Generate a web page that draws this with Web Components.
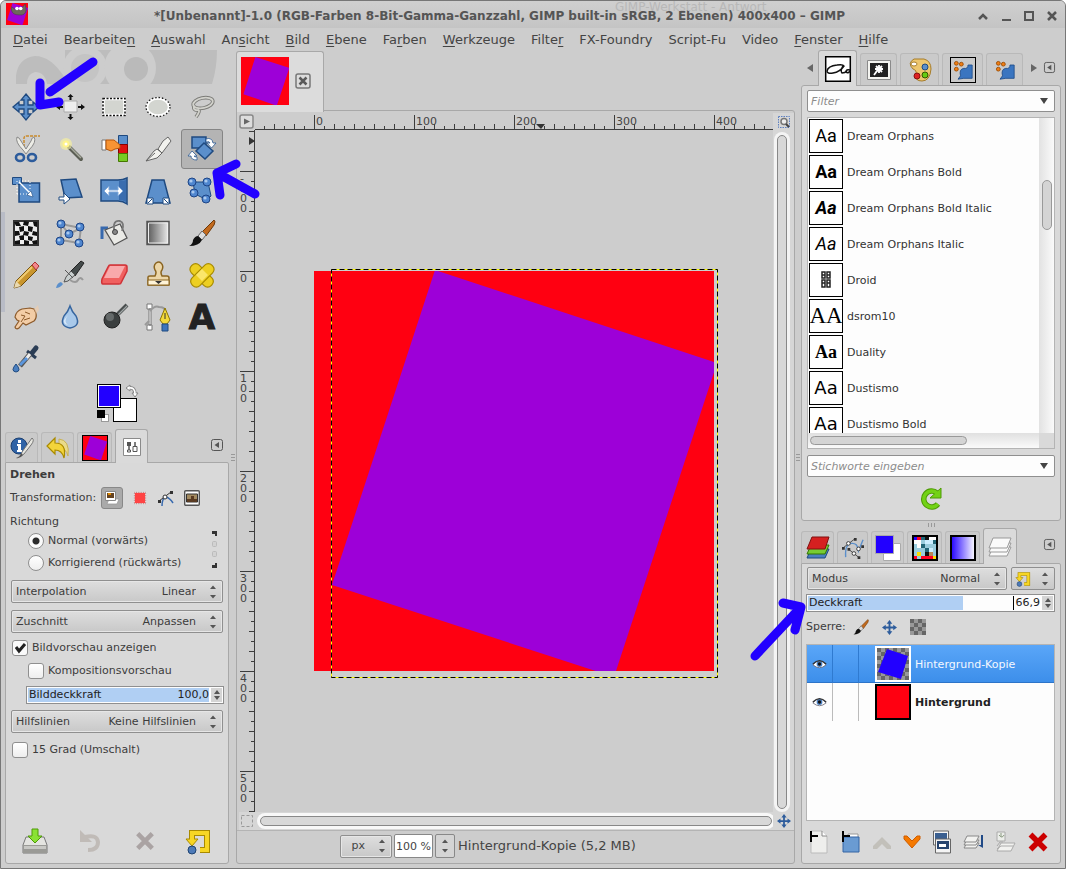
<!DOCTYPE html>
<html lang="de">
<head>
<meta charset="utf-8">
<title>GIMP</title>
<style>
html,body{margin:0;background:#fff;font:11px/16px "DejaVu Sans",sans-serif;color:#3c3c3c}
</style>
</head>
<body>
<gimp-window></gimp-window>
<script>
const RESET = `*{box-sizing:border-box}button,input,select{font:inherit;color:inherit;margin:0;padding:0;border:0;background:none;outline:0}button{display:flex;align-items:center;justify-content:center}`;
function define(name, css, html, ready) {
  customElements.define(name, class extends HTMLElement {
    connectedCallback() {
      if (this.shadowRoot) return;
      const root = this.attachShadow({ mode: 'open' });
      const t = document.createElement('template');
      t.innerHTML = `<style>${RESET}${css}</style>` + (typeof html === 'function' ? html(this) : html);
      root.append(t.content.cloneNode(true));
      if (ready) ready(this, root);
    }
  });
}
const B = 'fill="#5b8fcb" stroke="#1f4a80"';
const purple = `<path fill="#f01" d="M0 0h40v40H0z"/><path fill="#9d00d8" d="M12 0 40 9v1L30 40h-2L2 31z"/>`;
const node = (x, y) => `<circle cx="${x}" cy="${y}" r="4" fill="#4f86cf" stroke="#1d4486"/><circle cx="${x - 1}" cy="${y - 1}" r="1.6" fill="#a9c8ee"/>`;
const resetIcon = `<path fill="none" stroke="#a98a00" stroke-width="6" d="M7 12V5h15v17h-7"/><path fill="#f7d624" stroke="#a98a00" d="M1 11h12l-6 7z"/><path fill="none" stroke="#f7d624" stroke-width="4" d="M7 12V5h15v17h-7"/><circle cx="7" cy="22" r="4" fill="#4d7ab8" stroke="#1e4372"/>`;
const ICONS = {
  move: ['0 0 28 28', `<path ${B} stroke-width="1.3" d="M14 1l5 6h-3v5h5V9l6 5-6 5v-3h-5v5h3l-5 6-5-6h3v-5H7v3l-6-5 6-5v3h5V7H9z"/>`],
  align: ['0 0 28 28', `<path fill="#eee" stroke="#aaa" d="M8 8h13v11H8z"/><path fill="#111" d="M14.500 1l3 3h-2v3h-2V4h-2zM14.500 27l-3-3h2v-3h2v3h2zM29 14l-4 3v-2h-3v-2h3v-2zM0 14l4-3v2h3v2H4v2z"/>`],
  rect: ['0 0 28 28', `<path fill="#d3d5d0" stroke="#fff" stroke-width="2.500" d="M3.500 6h21v16h-21z"/><path fill="none" stroke="#111" stroke-width="1.500" stroke-dasharray="2 1.500" d="M3 5.500h22v17H3z"/>`],
  ellipse: ['0 0 28 28', `<ellipse cx="14" cy="14" rx="11" ry="8.500" fill="#d3d5d0" stroke="#fff" stroke-width="2.500"/><ellipse cx="14" cy="14" rx="12" ry="9.500" fill="none" stroke="#222" stroke-width="1.300" stroke-dasharray="1.600 1.800"/>`],
  lasso: ['0 0 28 28', `<g fill="none" stroke="#7c7c78" stroke-width="3.600"><ellipse cx="15" cy="10" rx="10" ry="5" transform="rotate(-12 15 10)"/><path d="M7 13c-3 2 0 5 3 4 2 0 1 3-2 7"/></g><g fill="none" stroke="#d2d2cc" stroke-width="1.800"><ellipse cx="15" cy="10" rx="10" ry="5" transform="rotate(-12 15 10)"/><path d="M7 13c-3 2 0 5 3 4 2 0 1 3-2 7"/></g>`],
  scissors: ['0 0 28 28', `<path fill="none" stroke="#c98b2d" stroke-width="1.500" stroke-dasharray="3 1" d="M12 12V3q0-2 3-2h13"/><path fill="#ecece6" stroke="#888" d="M5 2q-2 5 6 13l3 4 3-4Q25 7 22 2q-2 0-3 4l-5 8-5-8Q7 2 5 2z"/><ellipse cx="8" cy="22.500" rx="4" ry="3.500" fill="none" stroke="#2d5c9c" stroke-width="2.600"/><ellipse cx="20" cy="22.500" rx="4" ry="3.500" fill="none" stroke="#2d5c9c" stroke-width="2.600"/>`],
  wand: ['0 0 28 28', `<path stroke="#5c5f55" stroke-width="4" stroke-linecap="round" d="M13 12l12 12"/><path stroke="#a6a99c" stroke-width="1.500" d="M14 12l11 11"/><circle cx="10" cy="9" r="6" fill="#fcf59a" opacity=".6"/><circle cx="10" cy="9" r="3.500" fill="#fff48a"/><circle cx="10" cy="9" r="1.500" fill="#fff"/>`],
  bycolor: ['0 0 28 28', `<path fill="#5b8fcb" stroke="#1f4a80" d="M18.500.5h9v9h-9z"/><path fill="#d11" stroke="#800" d="M18.500 9.500h9v9h-9z"/><path fill="#7c2" stroke="#470" d="M18.500 18.500h9v8h-9z"/><path fill="#fff" stroke="#777" d="M2 5h4v10H2z"/><path fill="#f79433" stroke="#b5550a" d="M6 5h8l6 5v3l-5 1-4 2-5-2z"/>`],
  scalpel: ['0 0 28 28', `<path fill="#f2f2ee" stroke="#666" d="M24 2l3 4-9 12-4-4 5-8zM13 14l5 4-5 5-11 3 8-10z"/><path stroke="#666" fill="none" d="M2 26l9-8"/>`],
  rotate: ['0 0 28 28', `<path ${B} stroke-width="1.500" d="M4 2h14v11H4z"/><path ${B} stroke-width="1.500" d="M16 8l9 8-8 8-9-8z"/><path fill="#fff" stroke="#2c5a94" stroke-width=".8" d="M18 4q6-2 7 4h3l-4.500 5-4.500-5h3q0-2-4-1zM9 25q-6 0-6-4H0l4-5 5 5H6q0 1 3 1z"/>`],
  scale: ['0 0 28 28', `<path ${B} stroke-width="1.500" d="M7 6h20.500v19H7z"/><path ${B} d="M.5.500h9v7h-9z"/><path stroke="#fff" stroke-dasharray="1 2" fill="none" d="M5 17V4h13v13z"/><path stroke="#fff" stroke-width="1.400" d="M7 5l11 11"/><path fill="#fff" stroke="#1f4a80" stroke-width=".6" d="M21 20l-6-2 4-4z"/>`],
  shear: ['0 0 28 28', `<path ${B} stroke-width="1.500" d="M5 3l15-1 6 18-17 1z"/><path fill="#fff" stroke="#1f4a80" d="M3 20h5v-4l6 6-6 5v-4H3z"/>`],
  persp: ['0 0 28 28', `<path ${B} stroke-width="1.500" d="M1 3h17q5 0 9-2v26q-4-3-9-3H1z"/><path fill="#3a6daf" d="M19 4q4 0 7-1v22q-3-2-7-2z"/><path fill="#fff" stroke="#7ca5d8" d="M4 14l5-5v4h9V9l5 5-5 5v-4H9v4z"/>`],
  flip: ['0 0 28 28', `<path ${B} stroke-width="1.500" d="M8 3h12l6 23H2z"/><path fill="#fff" stroke="#1f4a80" d="M3 21h6v6H3zM19 21h6v6h-6z"/><path stroke="#1f4a80" d="M8 22l-4 4M20 22l4 4"/>`],
  cage: ['0 0 28 28', `<path ${B} d="M5 5h15l3 14-4 4-12-6z"/>${node(4, 5)}${node(19, 5)}${node(18, 22)}${node(6, 16)}`],
  check: ['0 0 28 28', `<path fill="#eee" stroke="#333" stroke-width="2" d="M2 2h24v24H2z"/><path fill="#111" d="M2 3h5l2 4H4zM12 2l5 1-1 4-5-1zM21 3h4v5l-3-1zM7 8l5-1v5l-4 1zM16 7l5 1-1 5-4-1zM3 12h4l1 4-5 1zM12 12l5 1-1 4-5-1zM21 12l4 1v4l-5-1zM7 17l5-1v5H8zM16 17l5 1-1 4-4-1zM3 22l5-1v4H3zM12 21l5 1v4h-5zM20 22l5-1v4h-4z"/>`],
  cage2: ['0 0 28 28', `<path fill="none" stroke="#999" stroke-width="2" d="M5 5l20 4-2 15-18-3zl8 10 12-6"/>${node(5, 5)}${node(24, 8)}${node(13, 15)}${node(4, 22)}${node(23, 24)}`],
  bucket: ['0 0 28 28', `<path fill="none" stroke="#3769ae" stroke-width="3" d="M2 20V9h6"/><path fill="#eaeae6" stroke="#555" stroke-width="1.300" d="M20 5l7 14-13 7-9-15z"/><path fill="none" stroke="#777" stroke-width="1.800" d="M14 12V6q1-5 6-4 5 2 2 10"/><circle cx="15" cy="13" r="2.500" fill="#888" stroke="#444"/>`],
  gradient: ['0 0 28 28', `<defs><linearGradient id="g"><stop stop-color="#555"/><stop offset="1" stop-color="#eee"/></linearGradient></defs><path fill="url(#g)" stroke="#555" stroke-width="1.500" d="M3 2.500h22v23H3z"/><path fill="none" stroke="#eee" d="M4.500 4h19v20h-19z"/>`],
  brush: ['0 0 28 28', `<path fill="#c26a1e" stroke="#6d3808" d="M26 1q2 1 0 5l-8 11-4-4z"/><path fill="#ddd" stroke="#666" d="M14 12l4 4-4 5-4-4z"/><path fill="#111" d="M10 17l4 4q-3 6-13 6 4-2 4-6 2-4 5-4z"/>`],
  pencil: ['0 0 28 28', `<path fill="#c9952d" stroke="#6e4b0c" d="M20 4l5 5L9 25l-7 2 2-7z"/><path stroke="#f0cb72" stroke-width="2" d="M20 6L5 21"/><path fill="#f3868b" stroke="#a33" d="M20 4l3-3 4 4-3 4z"/><path fill="#e9d9b0" d="M2 27l2-7 5 5z"/>`],
  airbrush: ['0 0 28 28', `<path fill="#454b4b" stroke="#222" d="M25 0l3 2-9 13-5-4z"/><path fill="#c9cfcf" stroke="#555" d="M15 10l4 4-7 6-4 1 2-5zM9 9l8 8"/><path fill="none" stroke="#999" stroke-width="2" d="M14 19q6 4 8 0t5 0"/><path fill="#5b8fcb" d="M0 27q1-5 5-6l2 2q-3 4-7 4z"/>`],
  eraser: ['0 0 28 28', `<path fill="#f0605f" stroke="#cf3338" stroke-width="1.500" d="M10 4h15q2 0 2 2v4l-6 12q0 1-2 1H3q-2 0-1-5L8 6q1-2 2-2z"/><path fill="#f9a9ab" d="M10 5h15l-6 12H4z"/>`],
  stamp: ['0 0 28 28', `<path fill="#ecd6a8" stroke="#8a6420" stroke-width="1.500" d="M4 16q0-1 2-1h5q2-4 0-6-2-4 1-7 3-2 5 0 3 3 1 7-2 2 0 6h5q2 0 2 2v7H4z"/><path fill="#fff4d8" stroke="#8a6420" d="M4 19h21v5H4z"/><path fill="#333" d="M11 20h7l-3.500 3z"/>`],
  heal: ['0 0 28 28', `<g fill="#edcf22" stroke="#a88b00" stroke-width="1.200"><rect x="0" y="9" width="28" height="11" rx="5" transform="rotate(45 14 14)"/><rect x="0" y="9" width="28" height="11" rx="5" transform="rotate(-45 14 14)"/></g><path fill="#fbe66a" d="M14 8l6 6-6 6-6-6z"/>`],
  smudge: ['0 0 28 28', `<path fill="#f3cda6" stroke="#8c5a2a" stroke-width="1.200" d="M22 6l-4-1-8 1q-6 2-7 8l2 3 2 1-4 6q1 3 4 1l4-5 3 2 8-4q3-3 2-8z"/><path fill="#f3cda6" opacity=".6" d="M22 6l4-4 1 5-3 4z"/><path fill="none" stroke="#8c5a2a" d="M9 12l4 1-4 6M12 17l6-2M13 9l5 2"/>`],
  drop: ['0 0 28 28', `<path fill="#a9c9ea" stroke="#36659f" stroke-width="1.500" d="M14 3q2 6 6 10 5 10-6 12-11-2-6-12 4-4 6-10z"/><path fill="#d9e9f8" d="M12 12q-5 7 0 10-5-1-4-5z"/>`],
  dodge: ['0 0 28 28', `<path stroke="#4a4f4f" stroke-width="4" d="M17 12L27 2"/><path stroke="#a0a6a6" stroke-width="1.200" d="M18 12L27 3"/><circle cx="12" cy="17" r="8" fill="#3b3f3f" stroke="#222"/><circle cx="10" cy="14" r="4" fill="#656a6a"/>`],
  paths: ['0 0 28 28', `<path fill="#fff" stroke="#777" d="M3 1h5v5H3zM3 22h5v5H3zM5 6h2v16H5z"/><path fill="none" stroke="#999" stroke-width="2" d="M6 8q5-6 9-4 6 0 6 4M1 22l4-4"/><path fill="#f3d93a" stroke="#8b7400" d="M21 5l5 12-3 4h-4l-3-4z"/><path stroke="#333" d="M21 10v6"/><path fill="#3d74bb" stroke="#1f4a80" d="M18 21h6v7h-6z"/>`],
  text: ['0 0 28 28', `<text x="14" y="26" text-anchor="middle" font-family="DejaVu Sans" font-weight="bold" font-size="34" fill="#222" stroke="#222">A</text>`],
  picker: ['0 0 28 28', `<path stroke="#2b3d55" stroke-width="5" stroke-linecap="round" d="M20 8l4-5"/><path stroke="#2b3d55" stroke-width="3" d="M15 6l9 7"/><path stroke="#555" stroke-width="5" d="M18 9L8 21"/><path stroke="#eee" stroke-width="3" d="M18 9l-4 5"/><path stroke="#5b96dd" stroke-width="3" d="M15 13L8 20"/><path fill="#4a7fc0" stroke="#1f4a80" d="M4 19q6 7 0 8-6-1 0-8z"/>`],
  swap: ['0 0 14 14', `<path fill="none" stroke="#888" stroke-width="3.500" d="M4 4q6-1 6 6"/><path fill="#fff" stroke="#888" d="M5 1v6L1 4zM7 9h6l-3 4z"/><path fill="none" stroke="#fff" stroke-width="1.600" d="M4 4q6-1 6 6"/>`],
  info: ['0 0 24 24', `<circle cx="9" cy="10" r="8" fill="#2f63a6" stroke="#1c3f70"/><path fill="#fff" d="M8 4h3v3H8zM7 8h4v6h1v2H7v-2h1v-4H7z"/><path fill="#e6e6e0" stroke="#777" d="M22 2q3 2-1 7l-7 9-3 2 1-4z"/><path fill="#555" d="M11 17l2 2q-3 4-7 3 4-1 5-5z"/>`],
  undo: ['0 0 26 24', `<path fill="#eadb8a" stroke="#c8b258" d="M14 3q11 1 9 17-2-8-9-8z"/><path fill="#f3d43a" stroke="#a98a00" stroke-width="1.200" d="M10 2v5q12 0 9 15-2-8-9-8v4L2 10z"/>`],
  purple: ['0 0 40 40', purple],
  sliders: ['0 0 20 20', `<path fill="#fff" stroke="#8a8a8a" d="M1.500 1.500h17v17h-17z"/><path stroke="#555" stroke-width="1.500" d="M7 5v10M13 5v10"/><path fill="#555" d="M5 5h4v4H5z"/><path fill="#fff" stroke="#555" d="M11 9.500h4v5h-4zM5.500 13h3v2h-3z"/>`],
  menu: ['0 0 12 12', `<rect x=".5" y=".5" width="11" height="11" rx="2" fill="none" stroke="#555"/><path fill="#555" d="M8 3v6L3.500 6z"/>`],
  play: ['0 0 16 16', `<rect x="1" y="1" width="13" height="13" rx="2" fill="#ddd" stroke="#888" stroke-width="1.500"/><path fill="#666" d="M5 4.500v6l6-3z"/>`],
  tlayer: ['0 0 16 16', `<path fill="#fff" stroke="#999" stroke-width=".8" d="M5 9h10l-2 5H3z"/><path fill="#fff" stroke="#888" d="M1.500 1.500h10v9h-10z"/><path fill="#654321" d="M3 3h7v5H3z"/><path fill="#d80" d="M4 3h3v2H4z"/>`],
  tsel: ['0 0 16 16', `<path fill="#f44" stroke="#fff" d="M1.500 1.500h13v13h-13z"/><path fill="none" stroke="#966" stroke-dasharray="1 1" d="M1.500 1.500h13v13h-13z"/>`],
  tpath: ['0 0 16 16', `<path stroke="#333" d="M1 11L13 2"/><path fill="none" stroke="#3769ae" stroke-width="1.500" d="M4 16q0-8 4-9 4 1 7 6"/><path fill="#333" d="M0 10h3v3H0zM12 1h3v3h-3z"/><circle cx="7" cy="7" r="2" fill="#fff" stroke="#333"/>`],
  timg: ['0 0 16 16', `<rect x=".7" y=".7" width="14.600" height="14.600" rx="1" fill="#fff" stroke="#555" stroke-width="1.400"/><path fill="#a28a60" stroke="#333" d="M2.500 4h11v8h-11z"/><path fill="#5a3b22" d="M3 9h10v3H3zM7 6h3v3H7z"/>`],
  chain: ['0 0 8 40', `<path fill="#333" d="M1 1h5v5H4V4H1zM1 35h3v-2h2v5H1z"/><g fill="#d2d2d2" stroke="#bbb"><rect x="1.500" y="11.500" width="4" height="5" rx="1"/><rect x="1.500" y="21.500" width="4" height="5" rx="1"/></g>`],
  save: ['0 0 26 26', `<path fill="#e4e4e0" stroke="#777" d="M4 9h18l3 8v8H1v-8z"/><path fill="#9a9a96" d="M1 17h24v8H1z"/><path fill="#c8c8c4" d="M2 18h22v3H2z"/><path fill="#8ae234" stroke="#4e9a06" d="M10 1h6v7h4l-7 7-7-7h4z"/>`],
  revert: ['0 0 26 26', `<path fill="none" stroke="#c0bbb7" stroke-width="4" d="M7 9q12-3 13 5 0 8-10 8"/><path fill="#c0bbb7" d="M2 2v12h12z"/>`],
  cross: ['0 0 22 22', `<path stroke="#aaa3a3" stroke-width="5" d="M3 3l16 16M19 3L3 19"/>`],
  reset: ['0 0 26 27', resetIcon],
  close: ['0 0 16 16', `<rect x="1" y="1" width="14" height="14" rx="2" fill="none" stroke="#777" stroke-width="1.500"/><path stroke="#5a5a5a" stroke-width="2.500" d="M4.500 4.500l7 7M11.500 4.500l-7 7"/>`],
  nav: ['0 0 16 16', `<path fill="#2d5c9c" d="M8 0l3 4H9v3h3V5l4 3-4 3V9H9v3h2l-3 4-3-4h2V9H4v2L0 8l4-3v2h3V4H5z"/>`],
  zoomfit: ['0 0 12 12', `<path fill="none" stroke="#5b7fc0" stroke-dasharray="1.500 1" d="M.5.500h11v11H.5z"/><circle cx="6" cy="5.500" r="3" fill="#eee" stroke="#777" stroke-width="1.500"/><path stroke="#444" stroke-width="2" d="M8 8l3 3"/>`],
  qmask: ['0 0 12 12', `<path fill="none" stroke="#999" stroke-dasharray="3 2" d="M.5.500h11v11H.5z"/>`],
  fonts: ['0 0 26 26', `<path fill="#fff" stroke="#000" stroke-width="1.500" d="M.7.700h24.600v24.600H.7z"/><path fill="none" stroke="#111" stroke-width="1.500" d="M2 15q1-5 10-6 6-1 7 1-4 6-11 7-6 1-6-2M18 10q-3 5-1 7 3 0 5-2"/><path fill="none" stroke="#111" stroke-width="1.500" d="M25 14q-4-1-4 2 2 2 4-1"/>`],
  history: ['0 0 24 20', `<path fill="#f4f4f0" stroke="#8a8a8a" d="M.5.500h23v19H.5z"/><path fill="#222" d="M3 3h18v14H3z"/><path stroke="#fff" stroke-width="1.800" d="M12 5v8M8 9h8M9 6l6 6M15 6l-6 6M10 11l-3 4"/>`],
  palette: ['0 0 24 24', `<path fill="#edc66e" stroke="#a67c2a" d="M6 1h10q7 2 7 10-1 12-9 12-7 0-6-6 1-5-3-6-6-6 1-10z"/><ellipse cx="6" cy="6" rx="3" ry="2" fill="#fff" stroke="#a67c2a"/><circle cx="17" cy="9" r="3" fill="#5b8fcb" stroke="#1f4a80"/><circle cx="9" cy="18" r="3" fill="#d22" stroke="#811"/><circle cx="17" cy="17" r="3" fill="#6c1" stroke="#350"/>`],
  brushes: ['0 0 24 24', `<g fill="#ef7d14" stroke="#964800"><circle cx="4" cy="4" r="2.300"/><circle cx="10" cy="5" r="2.300"/><circle cx="4" cy="11" r="2.300"/></g><path fill="#3a75c0" stroke="#1d4a88" d="M23 6v16H13l-7 1 3-4q-2-8 4-9 5 1 5-4z"/>`],
  refresh: ['0 0 24 24', `<path fill="none" stroke="#4e9a06" stroke-width="5.500" d="M19 17a8 8 0 1 1-1-11"/><path fill="#73d216" stroke="#4e9a06" d="M22 1v10H11z"/><path fill="none" stroke="#73d216" stroke-width="3.500" d="M19 17a8 8 0 1 1-1-11"/>`],
  layers: ['0 0 24 24', `<path fill="#4a7fc0" stroke="#1f4a80" d="M5 13h18l-4 9H1z"/><path fill="#7c3" stroke="#370" d="M5 9h18l-4 9H1z"/><path fill="#d62020" stroke="#801010" d="M6 1h17l-4 12H1z"/>`],
  ptab: ['0 0 24 24', `<path fill="none" stroke="#5b8fcb" stroke-width="1.500" d="M4 22Q3 8 10 7t8 8l5-12"/><path stroke="#444" d="M1 12L14 2M8 14l10 8"/><g fill="#fff" stroke="#333"><circle cx="7" cy="7" r="2"/><circle cx="18" cy="13" r="2"/><circle cx="13" cy="18" r="2"/></g><path fill="#333" d="M0 11h3v3H0zM13 1h3v3h-3zM6 12h3v3H6zM17 21h3v3h-3zM21 9h3v3h-3z"/>`],
  fgbg: ['0 0 26 26', `<path fill="#fff" stroke="#aaa" d="M8.500 8.500h17v17h-17z"/><path fill="#2200ff" stroke="#aaa" d="M.5.500h18v18H.5z"/>`],
  cmap: ['0 0 26 26', `<path fill="#9cd" d="M0 0h26v26H0z"/><path fill="#20f" d="M1 1h4v4H1z"/><path fill="#f02" d="M5 1h4v4H5zM9 21h13v4H9zM1 21h4v4H1z"/><path fill="#267" d="M9 1h4v4H9zM13 13h4v4h-4zM9 9h4v4H9zM21 5h4v4h-4z"/><path fill="#111" d="M13 1h4v4h-4zM13 17h4v4h-4z"/><path fill="#fff" d="M17 1h8v4h-8zM5 9h4v4H5zM1 5h8v4H1z"/><path fill="#fd0" d="M5 17h4v4H5zM21 21h4v4h-4z"/><path fill="#b85" d="M17 17h4v4h-4z"/><path fill="#cef" d="M13 5h8v4h-8zM17 13h4v4h-4z"/><path fill="none" stroke="#000" stroke-width="2" d="M1 1h24v24H1z"/>`],
  bgrad: ['0 0 26 26', `<defs><linearGradient id="g"><stop stop-color="#2200ff"/><stop offset="1" stop-color="#fff"/></linearGradient></defs><path fill="url(#g)" stroke="#000" stroke-width="2" d="M1 1h24v24H1z"/>`],
  sheets: ['0 0 24 24', `<g fill="#fafafa" stroke="#999"><path d="M5 12h18l-4 9H1z"/><path d="M5 8h18l-4 9H1z"/><path d="M5 3h18l-4 10H1z"/></g>`],
  eye: ['0 0 18 12', `<path fill="#fff" stroke="#667" d="M1 7q8-9 16 0-8 7-16 0z"/><circle cx="9" cy="6" r="3.500" fill="#4a7fc0"/><circle cx="9" cy="6" r="2" fill="#111"/><path fill="none" stroke="#333" stroke-width="1.500" d="M1 6q8-8 16 0"/>`],
  grid: ['0 0 16 16', `<path fill="#999" d="M0 0h16v16H0z"/><path fill="#666" d="M0 0h4v4H0zM8 0h4v4H8zM4 4h4v4H4zM12 4h4v4h-4zM0 8h4v4H0zM8 8h4v4H8zM4 12h4v4H4zM12 12h4v4h-4z"/>`],
  kopie: ['0 0 36 36', `<path fill="#999" d="M0 0h36v36H0z"/><path stroke="#666" stroke-width="4" stroke-dasharray="4 4" d="M2 4h32M2 12h32M2 20h32M2 28h32M6 8h32M6 16h32M6 24h32M6 32h32"/><path fill="#2200ff" d="M12 3l21 7-7 23-23-7z"/><path fill="none" stroke="#fff" stroke-width="2" d="M1 1h34v34H1z"/>`],
  neu: ['0 0 20 24', `<path fill="#eeeeec" stroke="#bbb" d="M2 1h11l5 5v17H2z"/><path fill="#fff" stroke="#888" d="M13 1v5h5"/><path stroke="#000" stroke-width="2" d="M1 6h8M2 1v11"/>`],
  ordner: ['0 0 20 24', `<path fill="#fff" stroke="#999" d="M7 4h10v5H7z"/><path fill="#6a9bd2" stroke="#3465a4" d="M2 7h16v15H2z"/><path stroke="#000" stroke-width="2" d="M1 6h8M2 1v11"/>`],
  up: ['0 0 18 18', `<path fill="#c2c0ba" d="M0 13l9-9 9 9v3h-4l-5-5-5 5H0z"/>`],
  down: ['0 0 18 18', `<path fill="#f57900" stroke="#ce5c00" d="M1 3h3l5 5 5-5h3v3l-8 9-8-9z"/>`],
  dup: ['0 0 20 24', `<path fill="#f4f4f4" stroke="#666" d="M1.500 1h15v14h-15z"/><path fill="#3a5f90" d="M3 3h12v9H3z"/><path fill="#f4f4f4" stroke="#666" d="M3.500 9h15v14h-15z"/><path fill="#27446e" d="M5 11h12v8H5z"/><path fill="#fff" d="M7 14h7v3H7z"/>`],
  merge: ['0 0 20 20', `<g fill="#f2f2f0" stroke="#888"><path d="M3 11h12l-3 5H0z"/><path d="M3 8h12l-3 5H0z"/><path d="M3 4h12l-3 6H0z"/></g><path stroke="#204a87" stroke-width="2" d="M18 3v11"/><path fill="#204a87" d="M14 13h5v3z"/>`],
  anchor: ['0 0 20 22', `<path fill="#eceeea" stroke="#aaa" d="M1 1h8v9H1z"/><path fill="none" stroke="#8a9a80" d="M3 4q3 4 5 0M5 2v4"/><path fill="#f2f2f0" stroke="#aaa" d="M5 12h14l-4 8H1z"/><path fill="none" stroke="#aaa" d="M1 15l3-4h3M1 18l4-3h12"/>`],
  del: ['0 0 20 20', `<path stroke="#c00" stroke-width="5.500" d="M2.500 2.500l15 15M17.500 2.500l-15 15"/>`],
  updown: ['0 0 8 14', `<path fill="#555" d="M1 4l3-3.500L7 4zM1 10l3 3.500L7 10z"/>`],
  spin: ['0 0 8 10', `<path fill="#555" d="M1 4l3-4 3 4zM1 6l3 4 3-4z"/>`],
  tri: ['0 0 10 8', `<path fill="#444" d="M1 1h8L5 7z"/>`],
  left: ['0 0 6 8', `<path fill="#666" d="M6 0v8L0 4z"/>`],
  right: ['0 0 6 8', `<path fill="#666" d="M0 0v8l6-4z"/>`],
  wup: ['0 0 10 10', `<path fill="none" stroke="#555" stroke-width="2.500" d="M1 8l4-4 4 4"/>`],
  wmin: ['0 0 10 10', `<path stroke="#555" stroke-width="2" d="M1 9h9"/>`],
  wmax: ['0 0 10 10', `<path fill="none" stroke="#555" stroke-width="2" d="M1 1h8v8H1z"/>`],
  wclose: ['0 0 10 10', `<path stroke="#555" stroke-width="2.500" d="M1 1l8 8M9 1L1 9"/>`],
  tofu: ['0 0 12 20', `<path fill="none" stroke="#222" stroke-width="1.500" d="M2 2h3v6H2zM7 2h3v6H7zM2 10h3v7H2zM7 10h3v7H7zM2 5h3M7 5h3M2 13h3M7 13h3"/>`],
  wilber: ['0 0 24 24', `<g transform="scale(.6)">${purple}</g><path fill="#6e675c" stroke="#444" stroke-width=".6" d="M6 4l4 3h6l5-6 1 7q-1 6-8 5-7 0-8-5z"/><circle cx="12" cy="6" r="2" fill="#fff"/><circle cx="16" cy="6" r="2" fill="#fff"/>`]
};
define('g-icon', `:host{display:inline-flex;flex:none}svg{display:block;overflow:visible}`, el => {
  const [vb, body] = ICONS[el.getAttribute('name')];
  const w = el.getAttribute('w') || vb.split(' ')[2], h = el.getAttribute('h') || (el.getAttribute('w') ? w : vb.split(' ')[3]);
  return `<svg width="${w}" height="${h}" viewBox="${vb}" aria-hidden="true">${body}</svg>`;
});
define('arrow-mark', `:host{position:absolute;pointer-events:none;z-index:5}svg{display:block;overflow:visible}path{fill:none;stroke:#2200ff;stroke-linecap:round;stroke-linejoin:round;stroke-width:9}`,
  el => `<svg width="60" height="56"><path d="${el.getAttribute('d')}"/></svg>`);

define('title-bar', `
:host{display:flex;height:28px;align-items:center;position:relative;padding:0 8px 0 5px;background:linear-gradient(#d0d0d0,#c4c4c4)}
h1{flex:1;margin:0;text-align:center;font:bold 12px/14px "DejaVu Sans",sans-serif;color:#555;white-space:nowrap;padding:3px 7px 0 0}
.ghost{position:absolute;left:614px;top:0;font:12px/14px "DejaVu Sans",sans-serif;color:#b8b8b8;white-space:nowrap}
nav{display:flex;gap:13px;padding-top:3px}`,
`<span class="ghost">GIMP-Werkstatt - Antwort</span><g-icon name="wilber" w="22"></g-icon>
<h1>*[Unbenannt]-1.0 (RGB-Farben 8-Bit-Gamma-Ganzzahl, GIMP built-in sRGB, 2 Ebenen) 400x400 – GIMP</h1>
<nav><button aria-label="Einrollen"><g-icon name="wup"></g-icon></button><button aria-label="Minimieren"><g-icon name="wmin"></g-icon></button><button aria-label="Maximieren"><g-icon name="wmax"></g-icon></button><button aria-label="Schließen"><g-icon name="wclose"></g-icon></button></nav>`);
define('menu-bar', `:host{display:flex;height:22px;align-items:center;gap:16px;padding:2px 0 0 12px;box-sizing:border-box;font:13px/20px "DejaVu Sans",sans-serif;color:#444}u{text-decoration-thickness:1px;text-underline-offset:2px}`,
  ['<u>D</u>atei','Bearbeite<u>n</u>','<u>A</u>uswahl','An<u>s</u>icht','<u>B</u>ild','<u>E</u>bene','Fa<u>r</u>ben','<u>W</u>erkzeuge','Filte<u>r</u>','FX-Foundry','Script-Fu','Video','<u>F</u>enster','<u>H</u>ilfe'].map(t => `<button><span>${t}</span></button>`).join(''));

const TABS = `.tabs{display:flex;align-items:flex-end;height:35px;position:relative}
.tab{height:32px;border:1px solid #b9b9b9;border-bottom:0;border-radius:3px 3px 0 0;background:#cacaca;margin-right:3px}
.tab.on{background:#dadada;border-color:#a8a8a8;margin-bottom:-1px;height:36px;z-index:1}
.panel{border:1px solid #a8a8a8;border-radius:0 2px 3px 3px;background:#d9d9d9;display:flex;flex-direction:column}
.bar{display:flex;align-items:center}`;
const tab = (icon, w, label, on, iw) => `<button class="tab${on ? ' on' : ''}" style="width:${w}px" aria-label="${label}"><g-icon name="${icon}"${iw ? ` w="${iw}"` : ''}></g-icon></button>`;

define('combo-box', `:host{display:block}label{display:flex;align-items:center;height:23px;padding:0 5px 0 4px;border:1px solid #8f8f8f;border-radius:2px;background:linear-gradient(#dedede,#c8c8c8);box-shadow:inset 0 0 0 1px #e6e6e6}
select{appearance:none;flex:1;min-width:0;text-align:right;text-align-last:right;padding-right:13px;height:20px}`,
  el => `<label><span>${el.getAttribute('label') || ''}</span><select aria-label="${el.getAttribute('label') || 'Einheit'}"><option>${el.getAttribute('value')}</option></select><g-icon name="updown"></g-icon></label>`);
define('spin-slider', `:host{display:block}div{display:flex;align-items:center;height:18px;border:1px solid #8f8f8f;background:#fdfdfd;padding:1px}
label{display:flex;flex:1;min-width:0;align-items:center;justify-content:space-between;height:14px;padding-left:1px;color:#222;background:linear-gradient(#b0cff3,#b0cff3) 0 0/var(--fill) 100% no-repeat}
input{width:50px;text-align:right;height:14px}
:host([caret]) input{width:27px;border-left:1px solid #000}
button{width:11px;height:14px;background:#d4d4d4;margin-left:2px}`,
  el => `<div><label><span>${el.getAttribute('label')}</span><input value="${el.getAttribute('value')}"></label><button aria-label="Wert ändern"><g-icon name="spin"></g-icon></button></div>`);
define('search-box', `:host{display:block}label{display:flex;align-items:center;height:22px;padding:0 5px 0 3px;background:#fdfdfd;border:1px solid #8f8f8f;border-radius:2px}
input{flex:1;min-width:0;height:18px}input::placeholder{font-style:italic;color:#8c8c8c;opacity:1}`,
  el => `<label><input aria-label="${el.getAttribute('hint')}" placeholder="${el.getAttribute('hint')}"><g-icon name="tri"></g-icon></label>`);
const CHECK = `input[type=checkbox],input[type=radio]{appearance:none;width:16px;height:16px;border:1px solid #8f8f8f;border-radius:3px;background:linear-gradient(#fff,#eee);flex:none}
input[type=radio]{border-radius:50%}
input[type=radio]:checked{background:radial-gradient(circle,#2b2b2b 3px,#fafafa 4px)}
input[type=checkbox]:checked{background:#fafafa url("data:image/svg+xml,%3Csvg xmlns='http://www.w3.org/2000/svg' viewBox='0 0 14 14'%3E%3Cpath fill='none' stroke='%23222' stroke-width='3' d='M3 6l3 4 6-7'/%3E%3C/svg%3E")}
.opt{display:flex;align-items:center;gap:4px;height:22px}`;

const TOOLS = ['move','align','rect','ellipse','lasso','scissors','wand','bycolor','scalpel','rotate','scale','shear','persp','flip','cage','check','cage2','bucket','gradient','brush','pencil','airbrush','eraser','stamp','heal','smudge','drop','dodge','paths','text','picker'];
define('tool-box', `:host{display:block;height:379px}
.head{display:block;height:36px;overflow:hidden}
.grid{display:grid;grid-template-columns:repeat(5,42px);grid-auto-rows:40px;gap:2px;padding-top:1px}
.grid button{border-radius:3px;border:1px solid transparent}.grid .on{background:#b4b4b4;border-color:#858585}
.colors{display:grid;grid-template-columns:16px 8px 16px;grid-template-rows:14px 10px 14px;width:40px;margin:5px 0 0 92px;height:38px}
.colors *{border:1px solid #000}
.fg{grid-area:1/1/3/3;background:#2200ff;box-shadow:inset 0 0 0 1px #fff;z-index:1}.bg{grid-area:2/2/4/4;background:#fff}
.colors g-icon{grid-area:1/3;border:0;margin-left:4px}
.def{grid-area:3/1;width:8px;height:8px;background:#000;margin-top:2px;box-shadow:4px 4px 0 -1px #fff,4px 4px 0 0 #999}`,
`<svg class="head" width="212" height="36"><path fill="#bdbdbd" d="M60 0h152q0 18-5 34H60zM11 34V26Q13 8 30 6q16 0 30 22v6H42q-2-12-12-12-8 2-8 12z"/><circle cx="80" cy="18" r="22" fill="#cdcdcd"/><circle cx="80" cy="18" r="14" fill="#c4c4c4"/><circle cx="125" cy="18" r="26" fill="#cdcdcd"/><circle cx="131" cy="19" r="12" fill="#bababa"/><path fill="#cdcdcd" d="M0 34h212v2H0z"/></svg>
<div class="grid">${TOOLS.map(n => `<button class="${n === 'rotate' ? 'on' : ''}" aria-label="${n}"><g-icon name="${n}"></g-icon></button>`).join('')}</div>
<div class="colors"><button class="fg" aria-label="Vordergrundfarbe"></button><button class="bg" aria-label="Hintergrundfarbe"></button><g-icon name="swap"></g-icon><span class="def"></span></div>`);

define('tool-options', TABS + CHECK + `
:host{display:flex;flex-direction:column;flex:1}
.tabs{height:33px}.tab{height:30px}.tab.on{height:34px}
.menu{margin:0 6px 11px auto}
.panel{flex:1;padding:3px 4px 8px}
h2{font:bold 11px/17px "DejaVu Sans",sans-serif;margin:0}
.tr{height:24px;margin-top:3px;gap:8px}.tr button{width:18px;height:22px;border-radius:3px}.tr .on{width:22px;background:#aaa;border:1px solid #888}
.tr{white-space:nowrap}.tr span{margin-right:-3px}
.dir{display:flex;justify-content:space-between;padding:0 5px 0 18px}
.rich{margin-top:4px}combo-box{margin:0 1px}
.actions{margin-top:auto;justify-content:space-between;height:28px;padding:0 13px 0 12px}`,
`<div class="tabs">${tab('info', 33, 'Gerätestatus', 0)}${tab('undo', 33, 'Journal', 0)}<button class="tab" style="width:35px" aria-label="Bilder"><g-icon name="purple" w="24" style="border:1px solid #000"></g-icon></button>${tab('sliders', 33, 'Werkzeugeinstellungen', 1)}<button class="menu" aria-label="Reitermenü"><g-icon name="menu"></g-icon></button></div>
<div class="panel"><h2>Drehen</h2>
<div class="bar tr"><span>Transformation:</span><button class="on" aria-label="Ebene"><g-icon name="tlayer"></g-icon></button><button aria-label="Auswahl"><g-icon name="tsel" w="14"></g-icon></button><button aria-label="Pfad"><g-icon name="tpath"></g-icon></button><button aria-label="Bild"><g-icon name="timg"></g-icon></button></div>
<div class="rich">Richtung</div>
<div class="dir"><div><label class="opt"><input type="radio" name="r" checked>Normal (vorwärts)</label><label class="opt"><input type="radio" name="r">Korrigierend (rückwärts)</label></div><g-icon name="chain"></g-icon></div>
<combo-box label="Interpolation" value="Linear" style="margin-top:6px"></combo-box>
<combo-box label="Zuschnitt" value="Anpassen" style="margin-top:7px"></combo-box>
<label class="opt" style="margin:4px 0 0 2px"><input type="checkbox" checked>Bildvorschau anzeigen</label>
<label class="opt" style="margin:1px 0 0 18px"><input type="checkbox">Kompositionsvorschau</label>
<spin-slider label="Bilddeckkraft" value="100,0" style="--fill:100%;margin:4px 0 0 16px"></spin-slider>
<combo-box label="Hilfslinien" value="Keine Hilfslinien" style="margin-top:6px"></combo-box>
<label class="opt" style="margin:6px 0 0 2px"><input type="checkbox">15 Grad (Umschalt)</label>
<div class="bar actions"><button aria-label="Speichern"><g-icon name="save"></g-icon></button><button aria-label="Wiederherstellen"><g-icon name="revert"></g-icon></button><button aria-label="Löschen"><g-icon name="cross" w="20"></g-icon></button><button aria-label="Zurücksetzen"><g-icon name="reset"></g-icon></button></div></div>`);

/* Ticks every 10 units, labels every 100; the origin keeps the 400px image centred. */
define('image-ruler', `:host{display:block;overflow:hidden;min-width:0;min-height:0}svg{display:block;width:100%;height:100%}path{stroke:#3c3c3c;fill:none}.mark{fill:#333;stroke:none}text{font:11px "DejaVu Sans",sans-serif;fill:#444}`, '<svg></svg>', (el, root) => {
  const v = el.hasAttribute('vertical'), svg = root.querySelector('svg');
  const draw = () => {
    const size = v ? el.clientHeight : el.clientWidth;
    const origin = Math.floor(size / 2) - 200;
    let d = '', text = '';
    for (let p = -Math.floor(origin / 10) * 10; origin + p < size; p += 10) {
      const at = origin + p, len = p % 100 === 0 ? 15 : p % 20 === 0 ? 6 : 4;
      d += v ? `M16 ${at + .5}h${-len}` : `M${at + .5} 17v${-len}`;
      if (p % 100 === 0) {
        if (v) [...String(p)].forEach((c, i) => text += `<text x="1" y="${at + 11 + i * 10}">${c}</text>`);
        else if (at + 28 < size) text += `<text x="${at + 2}" y="12">${p}</text>`;
      }
    }
    svg.innerHTML = v
      ? `<path d="${d}M15.500 0v${size}"/>${text}<path class="mark" d="M10 ${origin - 134}v8l6-4z"/>`
      : `<path d="${d}M0 16.500h${size}"/>${text}<path class="mark" d="M${origin + 222} 11h9l-4 5z"/>`;
  };
  new ResizeObserver(draw).observe(el);
});
define('image-view', `
:host{display:flex;flex-direction:column;flex:1;min-width:0}
.tabrow{display:flex;height:60px}
.tab{width:88px;height:61px;margin-top:1px;display:flex;align-items:center;gap:6px;padding:0 0 2px 4px;border:1px solid #a8a8a8;border-bottom:0;border-radius:3px 3px 0 0;background:#dcdcdc;z-index:1}
.frame{flex:1;display:flex;flex-direction:column;border:1px solid #a8a8a8;border-radius:0 3px 3px 3px;background:#cdcdcd;padding-top:2px}
.view{flex:1;display:grid;grid-template-columns:16px minmax(0,1fr) 21px;grid-template-rows:17px minmax(0,1fr) 18px;padding-left:2px}
.canvas{display:flex;align-items:center;justify-content:center;overflow:hidden}
.canvas svg{flex:none;overflow:visible}
.c{display:flex;align-items:center;justify-content:center}
.side{background:#d6d6d6}
.v{display:flex;justify-content:center;padding:5px 6px 3px 3px;background:#d6d6d6}.h{display:flex;align-items:center;padding:0 0 0 2px;background:#d6d6d6}
.v i{width:10px;border-radius:6px;border:1px solid #888;background:#d8d8d8;box-shadow:0 0 0 3px #f4f4f4}
.h i{height:10px;flex:1;margin:0 1px 0 3px;border-radius:6px;border:1px solid #888;background:#d8d8d8;box-shadow:0 0 0 3px #f8f8f8}
.status{height:33px;display:flex;align-items:center;border-top:1px solid #b4b4b4;padding:0 0 2px 103px;font:13px/20px "DejaVu Sans",sans-serif;color:#444}
.status combo-box{width:52px;font:11px/16px "DejaVu Sans",sans-serif}
input{width:39px;height:24px;border:1px solid #888;background:#fff;margin:0 2px;border-radius:2px;text-align:center;font:11px/16px "DejaVu Sans",sans-serif}
.step{width:20px;height:24px;border:1px solid #888;border-radius:2px;background:#d4d4d4;margin-right:3px}`,
`<div class="tabrow"><div class="tab"><g-icon name="purple" w="48"></g-icon><button aria-label="Bild schließen"><g-icon name="close"></g-icon></button></div></div>
<div class="frame"><div class="view">
<div class="c"><g-icon name="play"></g-icon></div><image-ruler></image-ruler><div class="c side"><g-icon name="zoomfit"></g-icon></div>
<image-ruler vertical></image-ruler>
<div class="canvas"><svg width="400" height="400" viewBox="0 0 400 400"><clipPath id="c"><path d="M0 0h400v400H0z"/></clipPath><path fill="#f01" d="M0 0h400v400H0z"/><path clip-path="url(#c)" fill="#9d00d8" d="M121-1 403 92 300 406 18 314z"/><path fill="none" stroke="#ff0" d="M17.500-1.500h386v408h-386z"/><path fill="none" stroke="#000" stroke-dasharray="5 3" d="M17.500-1.500h386v408h-386z"/></svg></div>
<div class="v"><i></i></div><div class="c side"><g-icon name="qmask"></g-icon></div><div class="h"><i></i></div><div class="c side"><g-icon name="nav" w="14"></g-icon></div>
</div><div class="status"><combo-box value="px"></combo-box><input aria-label="Zoom" value="100 %"><button class="step" aria-label="Zoomstufe"><g-icon name="updown"></g-icon></button><span>Hintergrund-Kopie (5,2 MB)</span></div></div>`);

const FONTS = [
  ['Dream Orphans', '18px Roboto', 'Aa'], ['Dream Orphans Bold', 'bold 18px Roboto', 'Aa'], ['Dream Orphans Bold Italic', 'italic bold 18px Roboto', 'Aa'],
  ['Dream Orphans Italic', 'italic 18px Roboto', 'Aa'], ['Droid', '11px Roboto', '<g-icon name="tofu"></g-icon>'], ['dsrom10', '23px "Liberation Serif"', 'AA'],
  ['Duality', 'bold 18px "Liberation Serif"', 'Aa'], ['Dustismo', '18px "DejaVu Sans"', 'Aa'], ['Dustismo Bold', '18px "DejaVu Sans"', 'Aa']];
define('font-dock', TABS + `
:host{display:flex;flex-direction:column}
.tabs{padding-left:17px}.larr{position:absolute;left:6px;top:14px}
.menu{margin:0 6px 12px auto}.rarr{margin:0 0 13px 5px}
.panel{padding:4px 5px 0;height:436px;border-radius:3px}
.list{margin:5px 0 6px;height:332px;display:grid;grid-template-columns:minmax(0,1fr) 15px;grid-template-rows:minmax(0,1fr) 15px;border:1px solid #b4b4b4;background:#fdfdfd}
ul{margin:0;padding:0 0 0 1px;list-style:none;overflow:hidden;color:#333}
li{display:flex;align-items:center;height:36px;gap:4px}
li span{padding-top:2px}
b{width:34px;height:34px;border:1px solid #000;display:flex;align-items:center;justify-content:center;overflow:hidden;background:#fff;color:#000;line-height:30px!important}
.vs{background:linear-gradient(90deg,#e2e2e2,#fafafa);padding:62px 2px 0 3px}.vs i{display:block;height:50px;border:1px solid #999;border-radius:5px;background:#d4d4d4}
.hs{background:linear-gradient(#e0e0e0,#fafafa);padding:3px 0 0 2px}.hs i{display:block;width:157px;height:9px;border:1px solid #999;border-radius:5px;background:#d4d4d4}
.k{background:#d9d9d9}
.re{align-self:center;margin-top:10px}`,
`<div class="tabs"><button class="larr" aria-label="Zurück"><g-icon name="left"></g-icon></button>${tab('fonts', 39, 'Schriften', 1)}${tab('history', 37, 'Dokumentenindex')}${tab('palette', 39, 'Paletten')}<button class="tab" style="width:41px" aria-label="Pinsel"><g-icon name="brushes" w="20" style="border:1px solid #000;padding:2px"></g-icon></button>${tab('brushes', 37, 'Pinselvorgaben', 0, 20)}<button class="rarr" aria-label="Weiter"><g-icon name="right"></g-icon></button><button class="menu" aria-label="Reitermenü"><g-icon name="menu" w="11"></g-icon></button></div>
<div class="panel"><search-box hint="Filter"></search-box>
<div class="list"><ul>${FONTS.map(f => `<li><b style='font:${f[1]}'>${f[2]}</b><span>${f[0]}</span></li>`).join('')}</ul><div class="vs"><i></i></div><div class="hs"><i></i></div><div class="k"></div></div>
<search-box hint="Stichworte eingeben"></search-box><button class="re" aria-label="Neu einlesen"><g-icon name="refresh"></g-icon></button></div>`);

define('layer-dock', TABS + `
:host{display:flex;flex-direction:column;flex:1}
.menu{margin:0 6px 13px auto}
.panel{flex:1;padding:3px 5px 7px}
.mode{gap:4px}.mode>:first-child{flex:1}
.grp{width:44px;height:23px;border:1px solid #8f8f8f;border-radius:2px;background:linear-gradient(#dedede,#c8c8c8);justify-content:space-between;padding:0 5px 0 3px}
spin-slider{margin:4px 0 0 -1px}
.lock{height:22px;margin:4px 0 6px -1px;gap:13px}.lock span{margin-right:-6px}
.layers{flex:1;border:1px solid #b4b4b4;background:#fdfdfd;margin:0 0 7px -1px}
.row{display:grid;grid-template-columns:26px 26px 16px 36px auto;justify-content:start;height:38px;align-items:center;color:#222}
.row>button,.row>i{height:38px;border-right:1px solid #bbb}
.row.sel{background:linear-gradient(#5aa6f8,#3c8eea);color:#f4f8ff;box-shadow:inset 0 -1px #2d74c8}.row.sel>button,.row.sel>i{border-color:#2f7ad0}
.row span,.row strong{padding:2px 0 0 4px}
.red{width:36px;height:36px;background:#f01;border:2px solid #000;grid-column:4}.row g-icon.k{grid-column:4}
.act{height:28px;justify-content:space-between;padding:0 7px 0 2px}`,
`<div class="tabs">${tab('layers', 33, 'Ebenen')}${tab('ptab', 31, 'Pfade', 0, 22)}${tab('fgbg', 33, 'Farben')}${tab('cmap', 35, 'Farbtabelle')}${tab('bgrad', 35, 'Verläufe')}${tab('sheets', 34, 'Ebenenstapel', 1)}<button class="menu" aria-label="Reitermenü"><g-icon name="menu" w="11"></g-icon></button></div>
<div class="panel"><div class="bar mode"><combo-box label="Modus" value="Normal"></combo-box><button class="grp" aria-label="Modusgruppe"><g-icon name="reset" w="16"></g-icon><g-icon name="updown"></g-icon></button></div>
<spin-slider caret label="Deckkraft" value="66,9" style="--fill:67%"></spin-slider>
<div class="bar lock"><span>Sperre:</span><button aria-label="Pixel sperren"><g-icon name="brush" w="16"></g-icon></button><button aria-label="Position sperren"><g-icon name="nav" w="15"></g-icon></button><button aria-label="Alphakanal sperren"><g-icon name="grid"></g-icon></button></div>
<div class="layers"><div class="row sel"><button aria-label="Sichtbar"><g-icon name="eye" w="15" h="10"></g-icon></button><i></i><g-icon class="k" name="kopie"></g-icon><span>Hintergrund-Kopie</span></div>
<div class="row"><button aria-label="Sichtbar"><g-icon name="eye" w="15" h="10"></g-icon></button><i></i><div class="red"></div><strong>Hintergrund</strong></div></div>
<div class="bar act">${['neu', 'ordner', 'up', 'down', 'dup', 'merge', 'anchor', 'del'].map(n => `<button aria-label="${n}"><g-icon name="${n}"></g-icon></button>`).join('')}</div></div>`);

define('gimp-window', `
:host{display:flex;flex-direction:column;min-height:100vh;position:relative;background:linear-gradient(#b9bcc6,#b9bcc6) 0 211px/4px 100px no-repeat,#cdcdcd;border:1px solid #777;border-radius:6px 6px 0 0;box-sizing:border-box;overflow:hidden}
title-bar{margin-top:-1px}
main{flex:1;display:flex;padding:0 4px 4px 4px}
.left{width:224px;display:flex;flex-direction:column}
.right{width:260px;display:flex;flex-direction:column}
.grip{width:7px;display:flex;flex-direction:column;justify-content:center;align-items:center}
.grip.r{width:6px}
.grip i,.hg i{display:block;width:4px;height:1px;background:#999;margin:1px}
.hg{height:7px;display:flex;justify-content:center;align-items:center}.hg i{width:1px;height:4px}`,
`<title-bar></title-bar><menu-bar></menu-bar>
<main><div class="left"><tool-box></tool-box><tool-options></tool-options></div><div class="grip"><i></i><i></i><i></i></div>
<image-view></image-view><div class="grip r"><i></i><i></i><i></i></div>
<div class="right"><font-dock></font-dock><div class="hg"><i></i><i></i><i></i></div><layer-dock></layer-dock></div></main>
<arrow-mark style="left:34px;top:58px" d="M58 3L15 33M5 24V46L24 43"></arrow-mark>
<arrow-mark style="left:210px;top:160px" d="M44 33L6 12L25 3M6 12L9 34"></arrow-mark>
<arrow-mark style="right:256px;top:600px" d="M6 55L52 6L34 2M52 6L46 29"></arrow-mark>`);
</script>
</body>
</html>
